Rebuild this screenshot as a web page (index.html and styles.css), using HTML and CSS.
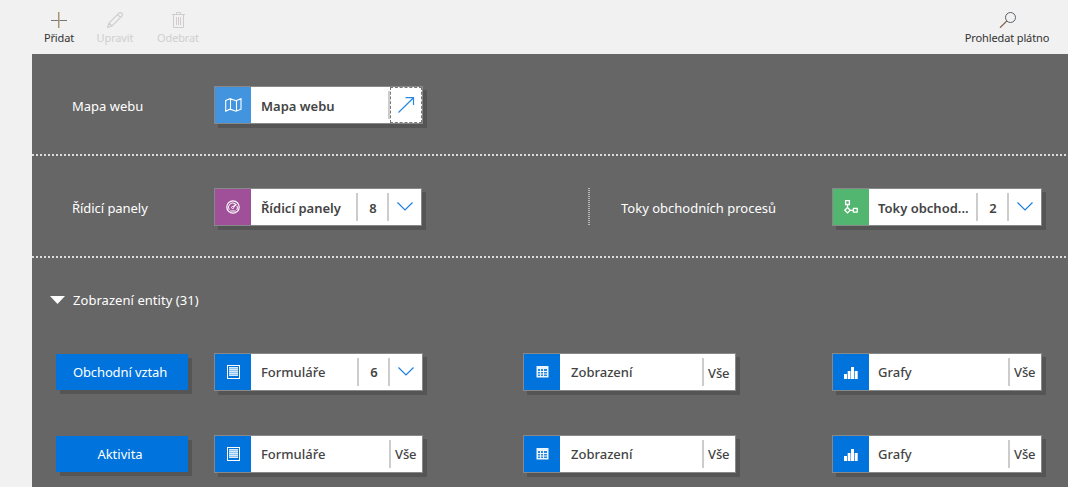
FILE: index.html
```html
<!DOCTYPE html>
<html lang="cs">
<head>
<meta charset="utf-8">
<title>Návrhář aplikací</title>
<link rel="stylesheet" href="styles.css">
</head>
<body>
<svg width="0" height="0" class="defs">
  <symbol id="form" viewBox="0 0 13 14"><rect x=".5" y=".5" width="12" height="13" fill="none" stroke="#fff"/><path d="M2 2h9v9H2z" fill="#8fc3f0"/><path d="M2 2.500h9M2 4.500h9M2 6.500h9M2 8.500h9M2 10.500h9" stroke="#d9ebfa"/></symbol>
  <symbol id="grid" viewBox="0 0 13 12"><path d="M.5 0h12v11.500H.5z" fill="#e9f4fd"/><path d="M2 3h2v2H2zM5 3h2v2H5zM8 3h3v2H8zM2 6h2v1.500H2zM5 6h2v1.500H5zM8 6h3v1.500H8zM2 8.500h2V10H2zM5 8.500h2V10H5zM8 8.500h3V10H8z" fill="#2685e0"/></symbol>
  <symbol id="chart" viewBox="0 0 14 12"><path d="M0 7h3v5H0zM3.700 4h2.800v8H3.700zM7 0h3v12H7zM10.700 4h3v8h-3z" fill="#fff"/></symbol>
  <symbol id="chevron" viewBox="0 0 16 10"><path d="M.5.500 8 8 15.500.500" fill="none" stroke="#1a7fdd" stroke-width="1.200"/></symbol>
</svg>
<header class="toolbar">
  <div class="tool tool-add"><svg width="16" height="16"><path d="M0 8.500h16" stroke="#777"/><path d="M7.500 0v16" stroke="#c08a40"/><path d="M8.500 0v16" stroke="#8fb4da" stroke-width=".6"/></svg><span>Přidat</span></div>
  <div class="tool tool-edit"><svg width="18" height="16" fill="none" stroke="#cfcfcf" stroke-width="1.200"><path d="M1.700 15.300 3 11 13 1q1.500-1 2.700.2t.3 2.800L6 14zM3 11l3 3M11.500 2.500l3 3"/></svg><span>Upravit</span></div>
  <div class="tool tool-remove"><svg width="13" height="16" fill="none" stroke="#d0cccb"><path d="M0 2.500h13M4.500 2V.500h4V2M1.500 3v12.500h10V3M4.500 5v8M6.500 5v8M8.500 5v8"/></svg><span>Odebrat</span></div>
  <div class="tool tool-search"><svg width="17" height="16" fill="none" stroke="#59606a"><circle cx="11.500" cy="5.500" r="5"/><path d="M7.800 9 1 15.700" stroke="#85614f" stroke-width="1.200"/></svg><span>Prohledat plátno</span></div>
</header>
<main class="canvas">
  <section class="band">
    <span class="label">Mapa webu</span>
    <div class="tile w209"><i class="icon sky"><svg width="17" height="14" fill="none" stroke="#fff" stroke-width="1.100"><path d="M.7 2.500 5 .700l6 2 5-2v10.500l-5 2-6-2-4.300 2zM5.500 1v10M11.500 2.500V13"/></svg></i><b class="name">Mapa webu</b><span class="open"><svg width="17" height="17" fill="none" stroke="#2b88de" stroke-width="1.200"><path d="M.5 15.500 15.500.800M7.500.700h8V8"/></svg></span></div>
  </section>
  <section class="band">
    <span class="label panels">Řídicí panely</span>
    <div class="tile w208"><i class="icon purple"><svg class="gauge" width="14" height="14" fill="none" stroke="#fff"><circle cx="7" cy="7" r="6.200" stroke-width="1.200"/><path d="M3.300 9.800a4.300 4.300 0 0 1 5.700-6.200M11 5.800a4 4 0 0 1-.3 4.200M4.200 11h5.600"/><circle cx="6.700" cy="7.500" r="1.100"/><path d="M7.500 6.700l2.800-2.800" stroke-width="1.500"/></svg></i><b class="name">Řídicí panely</b><b class="count">8</b><span class="expand"><svg width="16" height="10"><use href="#chevron"/></svg></span></div>
    <div class="process"><span class="label">Toky obchodních procesů</span></div>
    <div class="tile w210 near"><i class="icon green"><svg width="14" height="14" fill="none" stroke="#fff" stroke-width="1.300"><path d="M1.600.700h3.800v3.800H1.600zM3.500 4.500v3M3.500 7.500l2.700 2.700-2.700 2.700L.8 10.200zM6.200 10.300h3M9.400 8.400h3.800v3.800H9.400z"/></svg></i><b class="name">Toky obchod...</b><b class="count">2</b><span class="expand last"><svg width="16" height="10"><use href="#chevron"/></svg></span></div>
  </section>
  <h2 class="heading"><svg width="15" height="8"><path d="M0 0h15L7.500 8z" fill="#fff"/></svg><span>Zobrazení entity (31)</span></h2>
  <section class="entity">
    <div class="entity-name"><span class="relation">Obchodní vztah</span></div>
    <div class="tile w209"><i class="icon"><svg width="13" height="14"><use href="#form"/></svg></i><span class="name forms">Formuláře</span><b class="count">6</b><span class="expand"><svg width="16" height="10"><use href="#chevron"/></svg></span></div>
    <div class="tile w213"><i class="icon"><svg width="13" height="12"><use href="#grid"/></svg></i><span class="name views">Zobrazení</span><span class="all lower">Vše</span></div>
    <div class="tile w210 near"><i class="icon"><svg class="bars" width="14" height="12"><use href="#chart"/></svg></i><span class="name charts">Grafy</span><span class="all">Vše</span></div>
  </section>
  <section class="entity">
    <div class="entity-name"><span class="activity">Aktivita</span></div>
    <div class="tile w209"><i class="icon"><svg width="13" height="14"><use href="#form"/></svg></i><span class="name forms">Formuláře</span><span class="all">Vše</span></div>
    <div class="tile w213"><i class="icon"><svg width="13" height="12"><use href="#grid"/></svg></i><span class="name views">Zobrazení</span><span class="all">Vše</span></div>
    <div class="tile w210 near"><i class="icon"><svg class="bars" width="14" height="12"><use href="#chart"/></svg></i><span class="name charts">Grafy</span><span class="all">Vše</span></div>
  </section>
</main>
</body>
</html>
```
FILE: styles.css
```css
* { box-sizing: border-box; }
body { margin: 0; height: 487px; overflow: hidden; background: #f1f1f1; font: 13px/18px "Noto Sans", "Open Sans", sans-serif; color: #444; }
svg { display: block; flex: none; }
.defs { display: none; }
.toolbar { height: 54px; display: flex; padding: 12px 19px 0 44px; }
.tool { display: flex; flex-direction: column; align-items: center; font-size: 11px; line-height: 14px; gap: 3px; white-space: nowrap; color: #333; letter-spacing: -.13px; }
.tool-add { width: 30px; }
.tool-edit { width: 38px; margin-left: 22px; color: #cfcfcf; }
.tool-remove { width: 42px; margin-left: 23px; color: #cfcfcf; }
.tool-search { width: 84px; margin-left: auto; }
.canvas { margin-left: 32px; height: 433px; overflow: hidden; background: #666; }
.band, .entity { display: grid; grid-template-columns: 182px 309px 309px 1fr; }
.band { height: 102px; padding-top: 32px; background: repeating-linear-gradient(90deg, #ddd 0 2px, transparent 2px 4px) left bottom / 1034px 2px no-repeat; }
.label { color: #fff; line-height: 40px; margin-left: 40px; white-space: nowrap; }
.panels { letter-spacing: -.05px; }
.process { height: 38px; margin-left: 65px; background: repeating-linear-gradient(#bbb 0 1px, transparent 1px 2px) left top / 2px 38px no-repeat; }
.process .label { margin-left: 33px; }
.tile { height: 38px; display: flex; align-items: center; border: 1px solid #888; background: #fff; box-shadow: 4px 4px 0 #555; }
.w208 { width: 208px; }
.w209 { width: 209px; }
.w210 { width: 210px; }
.w213 { width: 213px; }
.icon { width: 36px; height: 36px; flex: none; display: flex; align-items: center; justify-content: center; background: #0073dc; }
.sky { background: #4294df; }
.purple { background: #a05098; }
.green { background: #52b670; }
.bars { margin-top: 2px; }
.gauge { margin-bottom: 1px; }
.name { flex: 1; min-width: 0; margin-left: 10px; white-space: nowrap; font-weight: 500; }
.w213 .name { margin-left: 11px; }
.near .name { margin-left: 9px; }
b.name, .count { font-weight: 600; }
.band .name { line-height: 38px; padding-top: 1px; }
.count { width: 31px; height: 28px; line-height: 28px; text-align: center; border-left: 2px solid #ccc; padding-left: 1px; }
.band .count { line-height: 30px; }
.expand { width: 34px; height: 28px; padding: 9px 0 0 8px; border-left: 2px solid #ccc; }
.all { width: 33px; height: 28px; line-height: 28px; padding-left: 4px; border-left: 2px solid #ccc; letter-spacing: -.1px; font-weight: 500; }
.lower { line-height: 30px; }
.open { width: 34px; height: 36px; display: flex; align-items: center; background: linear-gradient(#ccc, #ccc) left center / 2px 28px no-repeat; }
.open svg { box-sizing: border-box; width: 32px; height: 36px; margin-left: 2px; padding: 9px 0 0 7px; border: 1px dashed #777; }
.heading { height: 95px; margin: 0; padding: 33px 0 0 18px; display: flex; align-items: flex-start; gap: 9px; color: #fff; font-size: 13px; font-weight: 400; line-height: 18px; }
.heading span { letter-spacing: .05px; margin-left: -1px; }
.heading svg { margin-top: 5px; }
.entity { height: 82px; }
.entity-name { width: 132px; height: 36px; margin: 1px 0 0 24px; background: #0073dc; color: #fff; line-height: 36px; text-align: center; box-shadow: 4px 4px 0 #555; padding-right: 4px; white-space: nowrap; }
.relation { letter-spacing: -.12px; }
```
